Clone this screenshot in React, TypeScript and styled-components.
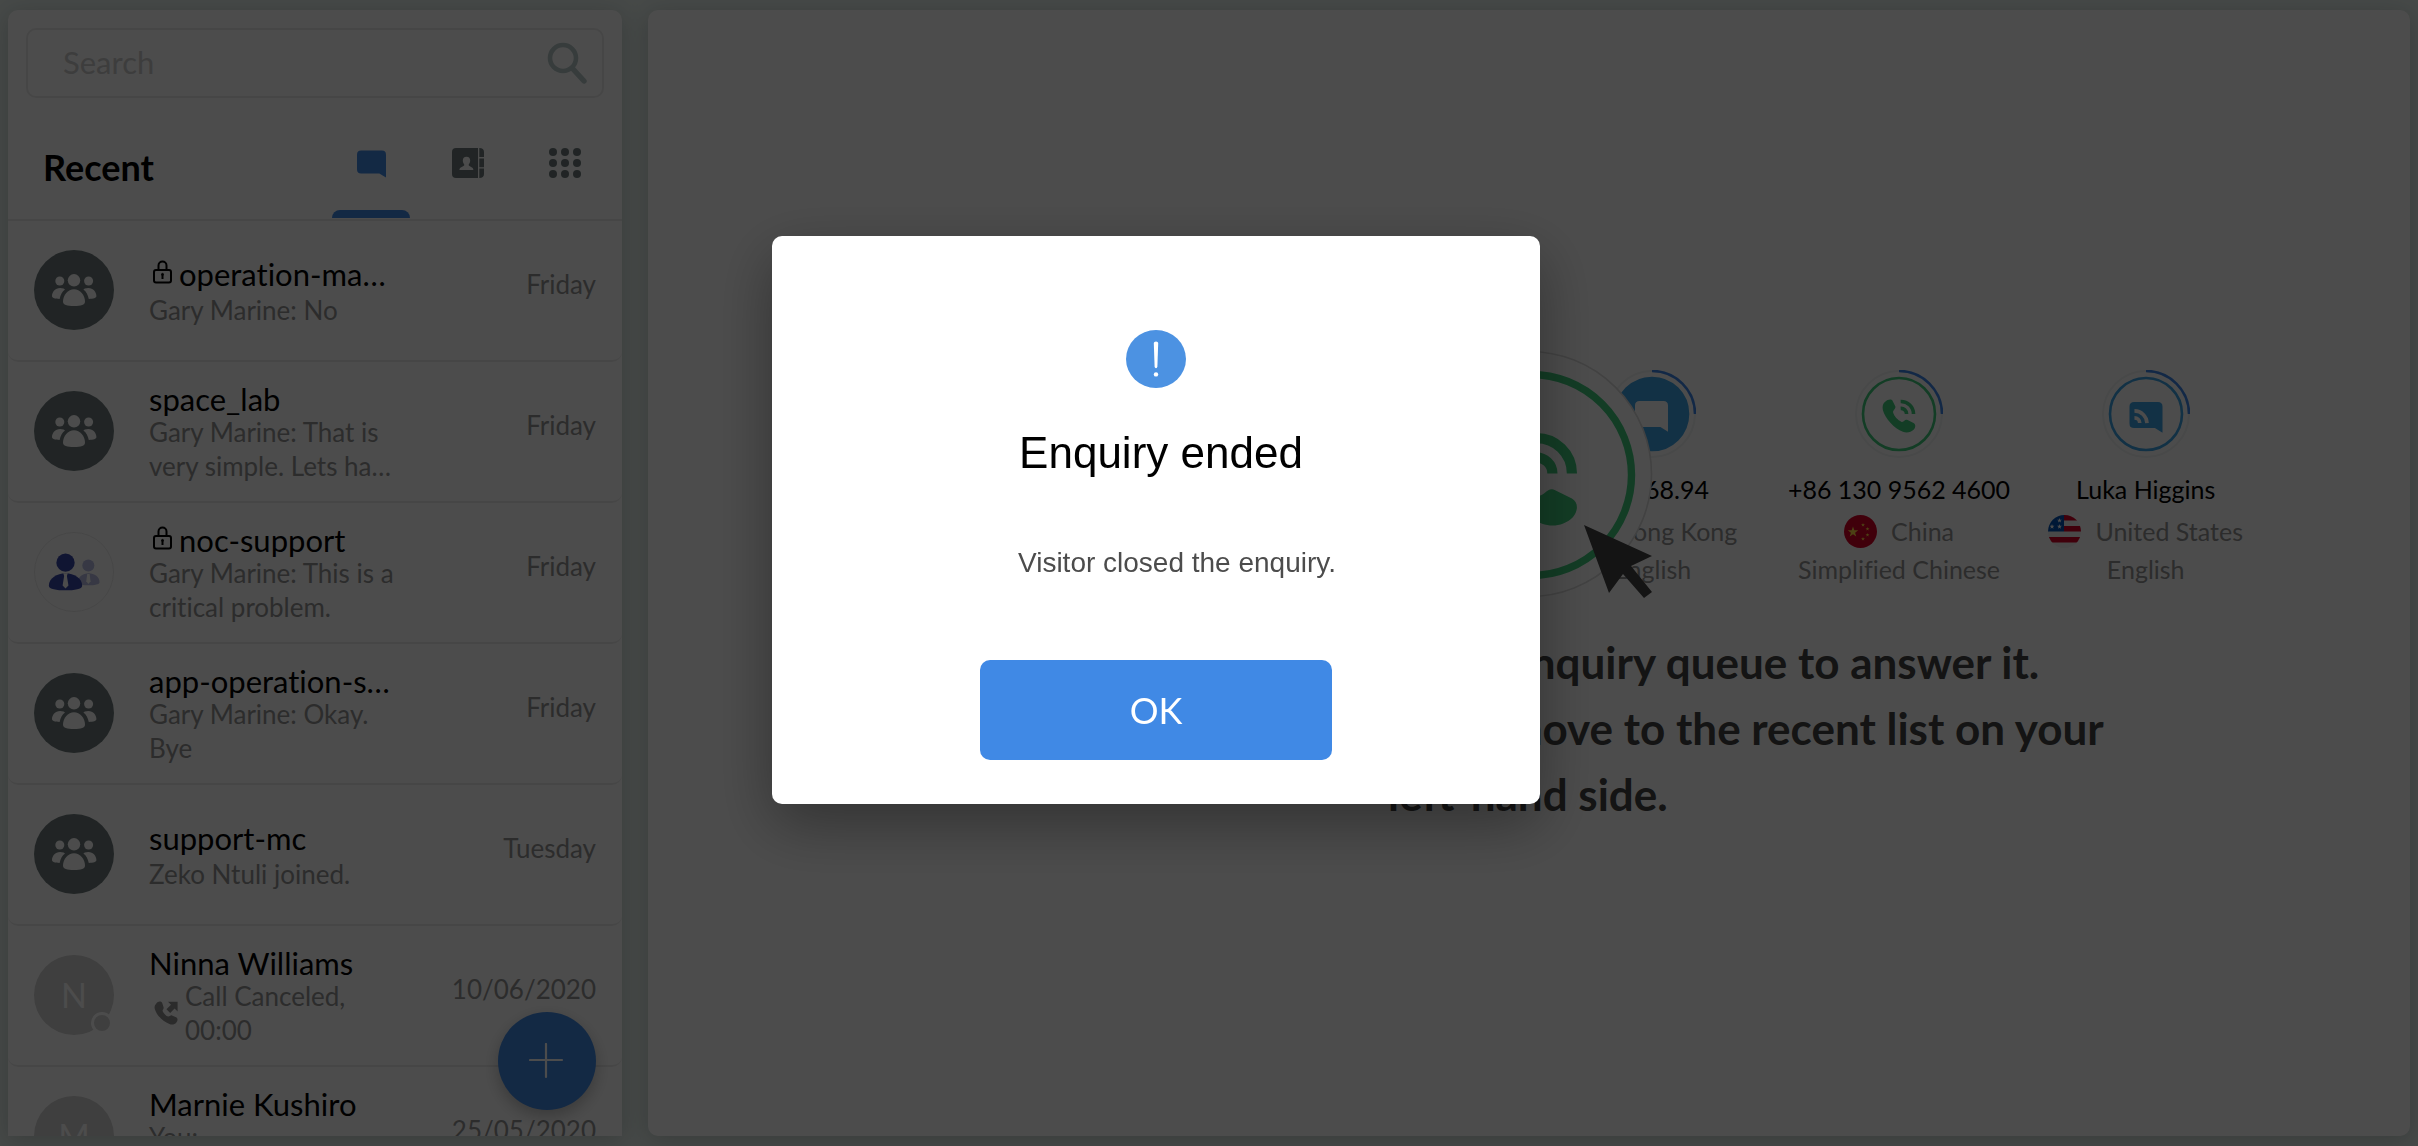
import React from "react";
import styled, { createGlobalStyle } from "styled-components";

const color = {
  primary: "#4089e5",
  slate: "#6e7b7c",
  muted: "#959595",
  line: "#ececec",
  green: "#40cc7e",
  sky: "#3ea4e6",
};

const GlobalStyle = createGlobalStyle`
  *, *::before, *::after { box-sizing: border-box; }
  html, body, #root { height: 100%; }
  body {
    margin: 0;
    overflow: hidden;
    background: #ebf5f1;
    color: #000;
    font-family: Lato, "Liberation Sans", sans-serif;
    font-variant-ligatures: no-common-ligatures;
  }
  button, input { font: inherit; }
  h1, h2, p, ul { margin: 0; padding: 0; }
`;

/* ---------- shell ---------- */

const Shell = styled.div`
  display: grid;
  grid-template-columns: minmax(0, 614fr) minmax(0, 1762fr);
  gap: 26px;
  height: 100vh;
  padding: 10px 8px;
`;

const Sidebar = styled.aside`
  position: relative;
  display: flex;
  flex-direction: column;
  min-height: 0;
  background: #fff;
  border-radius: 10px 10px 0 0;
  box-shadow: 0 4px 24px rgba(40, 60, 55, 0.24);
`;

const Main = styled.main`
  min-height: 0;
  overflow: hidden;
  padding-top: 360px;
  background: #fff;
  border-radius: 10px;
  box-shadow: 0 4px 24px rgba(40, 60, 55, 0.24);
`;

/* ---------- sidebar header ---------- */

const SearchBox = styled.form`
  display: flex;
  flex: none;
  align-items: center;
  height: 70px;
  margin: 18px 18px 0;
  padding: 0 14px 0 35px;
  border: 2px solid ${color.line};
  border-radius: 10px;
`;

const SearchInput = styled.input`
  flex: 1;
  min-width: 0;
  padding: 0 0 2px;
  border: 0;
  outline: 0;
  background: none;
  font-size: 31px;
  line-height: 36px;
  &::placeholder { color: #cdcdcd; opacity: 1; }
`;

const IconButton = styled.button`
  display: flex;
  padding: 0;
  border: 0;
  background: none;
  color: #b9caca;
`;

const ListHeader = styled.div`
  display: flex;
  flex: none;
  justify-content: space-between;
  height: 123px;
  padding: 0 18px 0 35px;
  border-bottom: 2px solid ${color.line};
`;

const ListTitle = styled.h1`
  padding-top: 48px;
  font-size: 36px;
  font-weight: 700;
  line-height: 42px;
`;

const Tabs = styled.nav`
  display: flex;
  gap: 19px;
`;

const Tab = styled.button<{ $active?: boolean }>`
  display: flex;
  flex-direction: column;
  align-items: center;
  justify-content: space-between;
  width: 78px;
  padding: 50px 0 1px;
  border: 0;
  background: none;
  color: ${(p) => (p.$active ? color.primary : color.slate)};
  &::after {
    content: "";
    width: 100%;
    height: 8px;
    border-radius: 8px 8px 0 0;
    background: ${(p) => (p.$active ? color.primary : "transparent")};
  }
`;

/* ---------- conversation list ---------- */

const List = styled.ul`
  flex: 1;
  min-height: 0;
  overflow: hidden;
  list-style: none;
`;

const Row = styled.li`
  display: flex;
  align-items: center;
  height: 141px;
  padding: 0 26px;
  border-bottom: 2px solid ${color.line};
  border-radius: 10px;
`;

const Avatar = styled.div<{ $tone: string; $outlined?: boolean }>`
  position: relative;
  display: flex;
  flex: none;
  align-items: center;
  justify-content: center;
  width: 80px;
  height: 80px;
  margin: 0 35px 2px 0;
  border: ${(p) => (p.$outlined ? `1px solid ${color.line}` : "0")};
  border-radius: 50%;
  background: ${(p) => p.$tone};
  color: #fff;
  font-size: 34px;
`;

const Presence = styled.span`
  position: absolute;
  right: 1px;
  bottom: 1px;
  width: 22px;
  height: 22px;
  border: 3px solid #fff;
  border-radius: 50%;
  background: #d2d2d2;
`;

const Summary = styled.div<{ $short: boolean }>`
  display: flex;
  flex: none;
  flex-direction: column;
  gap: ${(p) => (p.$short ? 3 : 0)}px;
  width: 256px;
  min-height: ${(p) => (p.$short ? 0 : 103)}px;
  padding-top: 3px;
`;

const Name = styled.h2`
  display: flex;
  align-items: center;
  gap: 7px;
  font-size: 31px;
  font-weight: 400;
  line-height: 32px;
  white-space: nowrap;
  svg { margin-left: 4px; margin-bottom: 4px; }
`;

const Preview = styled.p`
  display: flex;
  align-items: center;
  gap: 7px;
  color: ${color.muted};
  font-size: 26px;
  line-height: 34px;
  svg { flex: none; margin-left: 5px; }
`;

const When = styled.time`
  flex: 1;
  padding-bottom: 14px;
  color: ${color.muted};
  font-size: 26px;
  line-height: 32px;
  text-align: right;
  white-space: nowrap;
`;

const AddButton = styled.button`
  position: absolute;
  right: 26px;
  bottom: 26px;
  display: flex;
  align-items: center;
  justify-content: center;
  width: 98px;
  height: 98px;
  padding: 0;
  border: 0;
  border-radius: 50%;
  background: ${color.primary};
  box-shadow: 0 6px 16px rgba(0, 0, 0, 0.25);
`;

/* ---------- enquiry queue ---------- */

const Queue = styled.section`
  position: relative;
  display: grid;
  grid-template-columns: repeat(6, minmax(0, 1fr));
  padding: 0 8%;
`;

const Visitor = styled.article<{ $column: number }>`
  display: flex;
  grid-column: ${(p) => p.$column};
  grid-row: 1;
  flex-direction: column;
  align-items: center;
  color: ${color.muted};
  font-size: 25px;
  line-height: 36px;
  white-space: nowrap;
`;

const VisitorName = styled.h2`
  margin: 13px 0 4px;
  color: #000;
  font-size: 25px;
  font-weight: 400;
  line-height: 36px;
`;

const Country = styled.p`
  display: flex;
  align-items: center;
  gap: 14px;
  height: 40px;
`;

const Spotlight = styled.div`
  position: absolute;
  top: -21px;
  left: 50%;
  display: flex;
  margin-left: -125px;
`;

const Guide = styled.section`
  margin-top: 42px;
  padding: 0 16% 0 42%;
  color: #434343;
  font-size: 44px;
  font-weight: 700;
  line-height: 66px;
`;

/* ---------- dialog ---------- */

const Backdrop = styled.div`
  position: fixed;
  inset: 0;
  display: flex;
  align-items: center;
  justify-content: center;
  padding: 0 106px 106px 0;
  background: rgba(0, 0, 0, 0.7);
`;

const Dialog = styled.div`
  display: flex;
  flex-direction: column;
  align-items: center;
  width: 768px;
  max-width: 100%;
  padding: 94px 40px 44px;
  border-radius: 10px;
  background: #fff;
  box-shadow: 0 20px 60px rgba(0, 0, 0, 0.35);
  font-family: "Liberation Sans", Arial, sans-serif;
`;

const DialogTitle = styled.h2`
  margin-top: 39px;
  padding-left: 10px;
  font-size: 44px;
  font-weight: 400;
  line-height: 52px;
`;

const DialogText = styled.p`
  margin-top: 66px;
  padding-left: 42px;
  color: #4c4c4c;
  font-size: 28px;
  line-height: 36px;
`;

const OkButton = styled.button`
  width: 352px;
  height: 100px;
  margin-top: 79px;
  border: 0;
  border-radius: 10px;
  background: ${color.primary};
  color: #fff;
  font-family: Lato, "Liberation Sans", sans-serif;
  font-size: 36px;
`;

/* ---------- icons ---------- */

const CHAT = "M12 0H86Q100 0 100 14V93L77 79H14Q0 79 0 65V14Q0 0 14 0Z";

const SearchIcon = () => (
  <svg width="42" height="44" viewBox="0 0 42 44" fill="none" stroke="currentColor">
    <circle cx="17" cy="17" r="13" strokeWidth="4.6" />
    <path d="M27 28L38 40" strokeWidth="5.4" strokeLinecap="round" />
  </svg>
);

const ChatIcon = () => (
  <svg width="29" height="31" viewBox="0 -9 100 107" fill="currentColor">
    <path d={CHAT} />
  </svg>
);

const ContactsIcon = () => (
  <svg width="32" height="30" viewBox="0 0 32 30">
    <path fill="currentColor" d="M4 0H26V30H4Q0 30 0 26V4Q0 0 4 0Z" />
    <path fill="currentColor" d="M27.3 0Q32 0 32 4V9H27.3ZM27.3 10.6H32V19.2H27.3ZM27.3 20.6H32V26Q32 30 27.3 30Z" />
    <path fill="#fff" d="M14.5 8.8C17 8.8 18.2 10.5 18.2 12.6C18.2 14.8 17 16 16.6 17C17 18.6 21.4 18.8 21.4 22H7.4C7.4 18.8 12 18.6 12.4 17C12 16 10.8 14.8 10.8 12.6C10.8 10.5 12 8.8 14.5 8.8Z" />
  </svg>
);

const GridIcon = () => (
  <svg width="32" height="30" viewBox="0 0 32 30" fill="currentColor">
    {[4, 15, 26].map((y) => [4, 16, 28].map((x) => <circle key={`${x}-${y}`} cx={x} cy={y} r="4" />))}
  </svg>
);

const LockIcon = () => (
  <svg width="19" height="24" viewBox="0 0 19 24" fill="none" stroke="#000" strokeWidth="2">
    <rect x="1" y="10" width="17" height="12.4" rx="2" />
    <path d="M5.5 10V5.5a4 4 0 0 1 8 0V10" />
    <path d="M9.5 15v4" />
    <circle cx="9.5" cy="14.4" r="1" fill="#000" strokeWidth="1" />
  </svg>
);

const GroupIcon = () => (
  <svg width="80" height="80" viewBox="0 0 80 80" fill="#fff">
    <circle cx="40" cy="30.3" r="6.2" />
    <circle cx="25.8" cy="31" r="4.5" />
    <circle cx="54.6" cy="31" r="4.5" />
    <path d="M40 39.2C46 39.2 51 45 51 51.5C51 55 47 56 40 56S29 55 29 51.5C29 45 34 39.2 40 39.2Z" />
    <path d="M29.6 38.6C22.5 36.2 18 41.5 18 46C18 48.2 21 48.8 25.6 48.9C26.6 45 28 41.5 31 39.6Z" />
    <path d="M50.8 38.6C57.9 36.2 62.4 41.5 62.4 46C62.4 48.2 59.4 48.8 54.8 48.9C53.8 45 52.4 41.5 49.4 39.6Z" />
  </svg>
);

const SupportIcon = () => (
  <svg width="80" height="80" viewBox="0 0 80 80">
    <g fill="#b7bde3">
      <circle cx="54.7" cy="33.4" r="6.2" />
      <path d="M55 41.4C61 41.4 66.2 45 66.2 50.4C66.2 52.6 61 53.6 55 53.6S44 52.6 44 50.4C44 45 49 41.4 55 41.4Z" />
    </g>
    <path fill="#fff" d="M53.6 42h2.4l1 7.6-2.2 2.6-2.2-2.6Z" />
    <g fill="#3846a8">
      <circle cx="31.3" cy="30.4" r="9.4" />
      <path d="M31.3 41.4C40 41.4 48.4 46.5 48.4 54C48.4 57.4 40.5 58.8 31.3 58.8S14.2 57.4 14.2 54C14.2 46.5 22.6 41.4 31.3 41.4Z" />
    </g>
    <path fill="#fff" d="M29 41.2h4.6l-.9 3 1.6 9.6-3 3.2-3-3.2 1.6-9.6Z" />
  </svg>
);

const CallOutIcon = () => (
  <svg width="24" height="24" viewBox="0 0 24 24" fill="#909090">
    <path d="M2 3C4 0 7 0 8.2 2L9.6 6.2C10 8 8.4 8.8 8.6 10C9.6 12.4 11.6 14.6 14 15.6C15.4 15.8 16.4 14 18 14.4L22.6 16.4C24 17.6 23.8 19.6 22.4 21.4C20.6 23.6 18 24 15.4 23C8.8 20.4 2.4 14 .8 8C.3 6 .6 4.4 2 3Z" />
    <path d="M14 .8H23.6V10.4L20.6 7.4L16.2 12L12.4 8.2L17 3.8Z" />
  </svg>
);

const PlusIcon = () => (
  <svg width="36" height="36" viewBox="0 0 36 36" stroke="#fff" strokeWidth="2.2" strokeLinecap="round">
    <path d="M17 1V34M1 17H33" />
  </svg>
);

const Handset = () => (
  <>
    <path d="M9 6C14 0 27 -3 30 3L39 21C41 28 31 33 32 39C35 51 46 63 58 68C65 68 68 58 76 62L94 71C101 75 101 84 95 91C86 100 73 102 62 98C35 88 8 58 1 32C-1 20 1 12 9 6Z" />
    <path d="M55 6A38 38 0 0 1 94 44M55 27A17 17 0 0 1 73 44" fill="none" stroke={color.green} strokeWidth="11" />
  </>
);

const Ring = ({ tone, filled, children }: { tone: string; filled?: boolean; children: React.ReactNode }) => (
  <svg width="88" height="88" viewBox="0 0 88 88" fill="none">
    <circle cx="44" cy="44" r="43" stroke="#f1f4f4" strokeWidth="2" />
    <path d="M44 1A43 43 0 0 1 87 44" stroke="#3f86ea" strokeWidth="2.6" />
    <circle cx="44" cy="44" r="36" stroke={tone} strokeWidth="2.6" fill={filled ? tone : "none"} />
    {children}
  </svg>
);

const STAR = "M0 -10L2.4 -3.2H9.5L3.8 1.2L5.9 8.1L0 4L-5.9 8.1L-3.8 1.2L-9.5 -3.2H-2.4Z";

const Flag = ({ country }: { country: "hk" | "cn" | "us" }) => (
  <svg width="33" height="33" viewBox="0 0 33 33" aria-hidden="true">
    <clipPath id={`flag-${country}`}>
      <circle cx="16.5" cy="16.5" r="16.5" />
    </clipPath>
    <g clipPath={`url(#flag-${country})`}>
      <rect width="33" height="33" fill={country === "us" ? "#f4f4f4" : "#d80027"} />
      {country === "cn" && (
        <g fill="#ffda44">
          <path d={STAR} transform="translate(9 17) scale(.55)" />
          <path d={STAR} transform="translate(19 10) scale(.2)" />
          <path d={STAR} transform="translate(23.5 14) scale(.2)" />
          <path d={STAR} transform="translate(23.5 20) scale(.2)" />
          <path d={STAR} transform="translate(19 24) scale(.2)" />
        </g>
      )}
      {country === "us" && (
        <>
          <path fill="#d80027" d="M16 0H33V5.5H16ZM16 11H33V16.5H16ZM0 22H33V27.5H0Z" />
          <path fill="#0052b4" d="M0 0H16V16.5H0Z" />
          <g fill="#fff">
            <path d={STAR} transform="translate(11.5 5.5) scale(.26)" />
            <path d={STAR} transform="translate(4 11.6) scale(.26)" />
            <path d={STAR} transform="translate(11.5 11.6) scale(.26)" />
          </g>
        </>
      )}
    </g>
  </svg>
);

const SpotlightArt = () => (
  <svg width="250" height="250" viewBox="0 0 250 250">
    <circle cx="125" cy="125" r="122.5" fill="#fff" stroke="#dcdcdc" strokeWidth="1.6" />
    <circle cx="127" cy="126" r="100.5" fill="none" stroke={color.green} strokeWidth="7.4" />
    <g fill={color.green} transform="translate(80.5 83.5) scale(.93)">
      <Handset />
    </g>
    <path fill="#434343" d="M180 176L248 207L227 217L248 243L240 249L219 225L205 244Z" />
  </svg>
);

const NoticeIcon = () => (
  <svg width="60" height="58" viewBox="0 0 60 58">
    <ellipse cx="30" cy="29" rx="30" ry="29" fill="#4c92e2" />
    <path fill="#fff" d="M27.8 13Q27.8 11.4 30 11.4T32.2 13L31.4 36.6Q31.2 38.2 30 38.2T28.6 36.6Z" />
    <circle cx="30" cy="44.4" r="2.2" fill="#fff" />
  </svg>
);

/* ---------- data ---------- */

type Conversation = {
  name: string;
  avatar: string;
  locked?: boolean;
  call?: boolean;
  short?: boolean;
  preview: string;
  when: string;
};

const conversations: Conversation[] = [
  { name: "operation-ma…", avatar: "group", locked: true, short: true, preview: "Gary Marine: No", when: "Friday" },
  { name: "space_lab", avatar: "group", preview: "Gary Marine: That is very simple. Lets ha…", when: "Friday" },
  { name: "noc-support", avatar: "support", locked: true, preview: "Gary Marine: This is a critical problem.", when: "Friday" },
  { name: "app-operation-s…", avatar: "group", preview: "Gary Marine: Okay. Bye", when: "Friday" },
  { name: "support-mc", avatar: "group", short: true, preview: "Zeko Ntuli joined.", when: "Tuesday" },
  { name: "Ninna Williams", avatar: "N", call: true, preview: "Call Canceled, 00:00", when: "10/06/2020" },
  { name: "Marnie Kushiro", avatar: "M", preview: "You:", when: "25/05/2020" },
];

const ConversationAvatar = ({ kind }: { kind: string }) => {
  if (kind === "group") return <Avatar $tone={color.slate}><GroupIcon /></Avatar>;
  if (kind === "support") return <Avatar $tone="#fff" $outlined><SupportIcon /></Avatar>;
  return <Avatar $tone="#d2d2d2">{kind}<Presence /></Avatar>;
};

export default function App() {
  return (
    <>
      <GlobalStyle />
      <Shell>
        <Sidebar>
          <SearchBox role="search">
            <SearchInput type="text" placeholder="Search" aria-label="Search" />
            <IconButton type="button" aria-label="Search"><SearchIcon /></IconButton>
          </SearchBox>
          <ListHeader>
            <ListTitle>Recent</ListTitle>
            <Tabs>
              <Tab type="button" $active aria-label="Chats"><ChatIcon /></Tab>
              <Tab type="button" aria-label="Contacts"><ContactsIcon /></Tab>
              <Tab type="button" aria-label="Apps"><GridIcon /></Tab>
            </Tabs>
          </ListHeader>
          <List>
            {conversations.map((c) => (
              <Row key={c.name}>
                <ConversationAvatar kind={c.avatar} />
                <Summary $short={!!c.short}>
                  <Name>{c.locked && <LockIcon />}{c.name}</Name>
                  <Preview>
                    {c.call && <CallOutIcon />}
                    <span>{c.preview}</span>
                  </Preview>
                </Summary>
                <When>{c.when}</When>
              </Row>
            ))}
          </List>
          <AddButton type="button" aria-label="New conversation"><PlusIcon /></AddButton>
        </Sidebar>

        <Main>
          <Queue>
            <Visitor $column={4}>
              <Ring tone={color.sky} filled>
                <path d={CHAT} fill="#fff" transform="translate(27 31) scale(.33)" />
              </Ring>
              <VisitorName>118.68.94</VisitorName>
              <Country><Flag country="hk" />Hong Kong</Country>
              <p>English</p>
            </Visitor>
            <Visitor $column={5}>
              <Ring tone={color.green}>
                <g fill={color.green} transform="translate(27.5 29.5) scale(.33)"><Handset /></g>
              </Ring>
              <VisitorName>+86 130 9562 4600</VisitorName>
              <Country><Flag country="cn" />China</Country>
              <p>Simplified Chinese</p>
            </Visitor>
            <Visitor $column={6}>
              <Ring tone={color.sky}>
                <g transform="translate(27.5 32) scale(.33)">
                  <path d={CHAT} fill={color.sky} />
                  <path d="M15 27A38 38 0 0 1 53 64M15 48A16 16 0 0 1 31 64" stroke="#fff" strokeWidth="11" />
                </g>
              </Ring>
              <VisitorName>Luka Higgins</VisitorName>
              <Country><Flag country="us" />United States</Country>
              <p>English</p>
            </Visitor>
            <Spotlight><SpotlightArt /></Spotlight>
          </Queue>
          <Guide>
            <p>Open enquiry queue to answer it.</p>
            <p>It will move to the recent list on your left-hand side.</p>
          </Guide>
        </Main>
      </Shell>

      <Backdrop>
        <Dialog role="alertdialog" aria-modal="true" aria-labelledby="dialog-title" aria-describedby="dialog-text">
          <NoticeIcon />
          <DialogTitle id="dialog-title">Enquiry ended</DialogTitle>
          <DialogText id="dialog-text">Visitor closed the enquiry.</DialogText>
          <OkButton type="button">OK</OkButton>
        </Dialog>
      </Backdrop>
    </>
  );
}
